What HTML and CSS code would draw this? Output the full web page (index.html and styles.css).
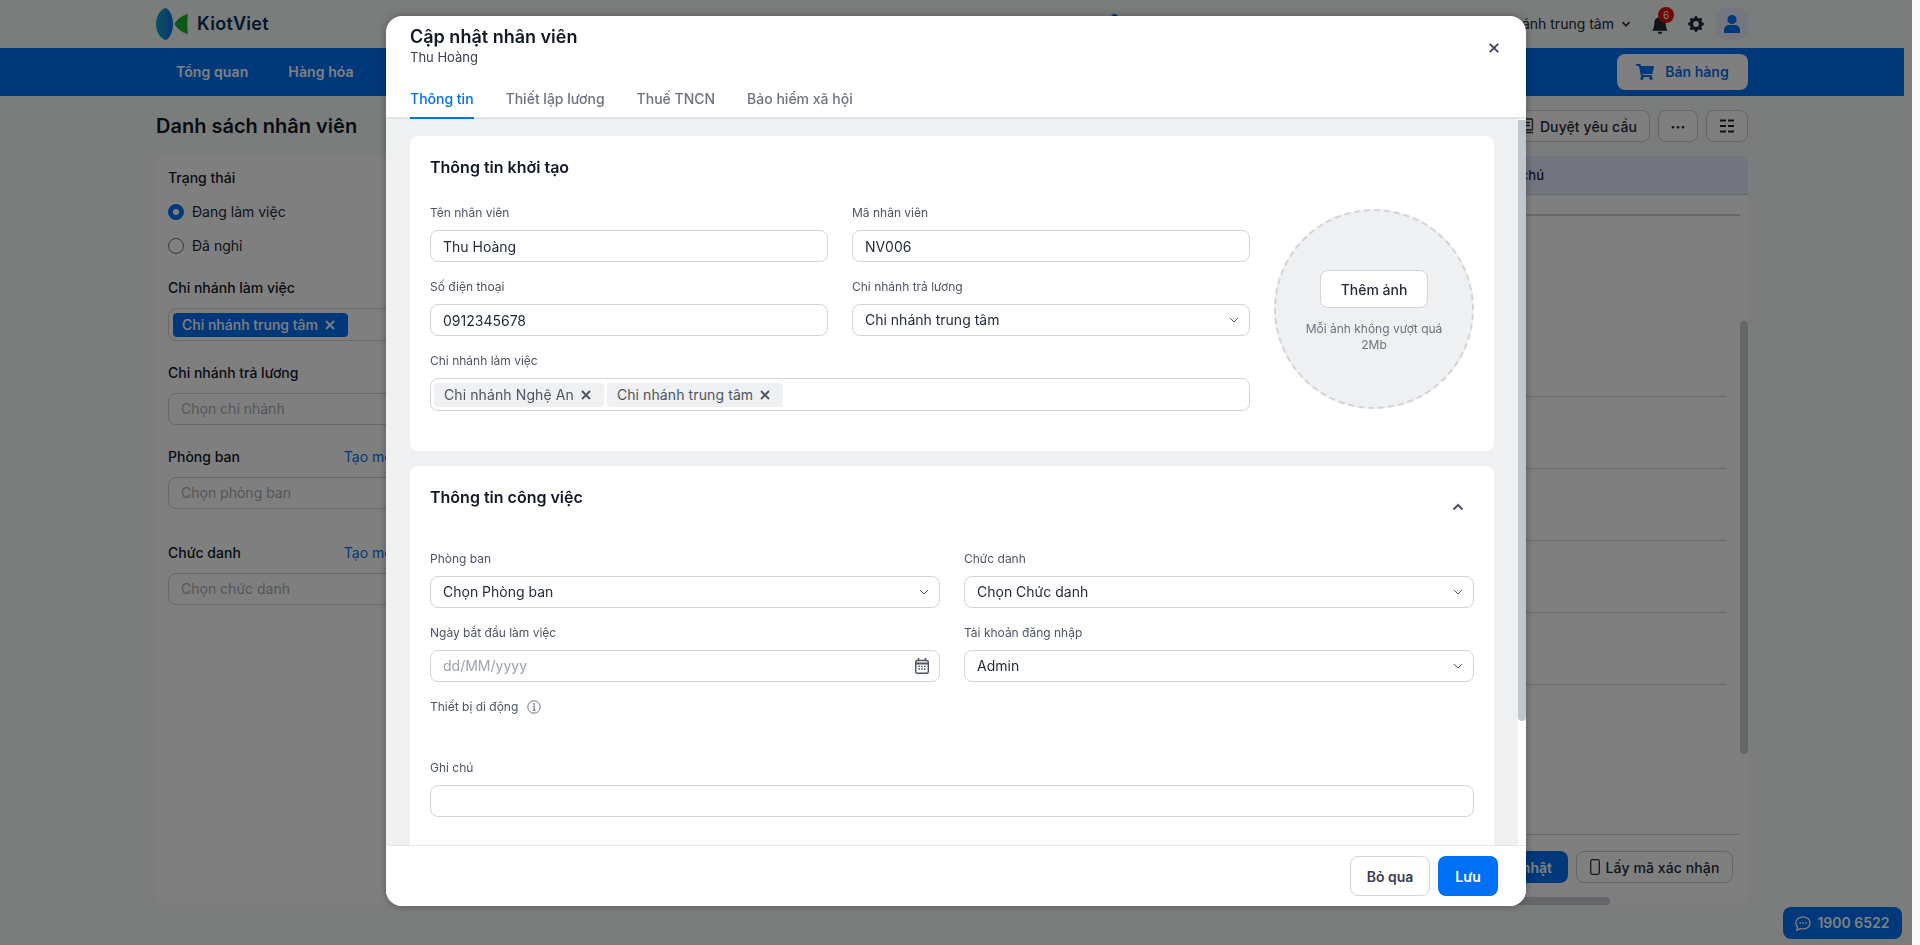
FILE: index.html
```html
<!DOCTYPE html>
<html lang="vi">
<head>
    <meta charset="UTF-8">
    <meta name="viewport" content="width=device-width, initial-scale=1.0">
    <title>Cập nhật nhân viên</title>
    <link rel="stylesheet" href="styles.css">
</head>
<body>
    <div class="app">
        <div class="topbar">
            <div class="logo">
                <svg width="32" height="32" viewBox="0 0 32 32">
                    <defs>
                        <linearGradient id="lens" x1="0" y1="0" x2="1" y2="0">
                            <stop offset="0" stop-color="#1aa3c4"/>
                            <stop offset="1" stop-color="#0a6fe0"/>
                        </linearGradient>
                    </defs>
                    <path d="M9 0C3 3 0 9 0 16s3 13 9 16c4 0 8-8 8-16S13 0 9 0z" fill="url(#lens)"/>
                    <path d="M32 6c-5 1-11 5-13.500 10C21 21 27 25 32 26c-1-7-1-13 0-20z" fill="#1fb02f"/>
                </svg>
                <span>KiotViet</span>
            </div>
            <span class="top-dot"></span>
            <div class="top-right">
                <span class="branch">Chi nhánh trung tâm</span>
                <svg class="branch-arrow" width="10" height="10" viewBox="0 0 10 10"><path d="M1.500 3.200 5 6.800l3.500-3.600" fill="none" stroke="#333" stroke-width="1.800"/></svg>
                <div class="bell">
                    <svg width="18" height="18" viewBox="0 0 16 16"><path fill="#1f2937" d="M8 16a2 2 0 0 0 2-2H6a2 2 0 0 0 2 2zm.995-14.901a1 1 0 1 0-1.990 0A5.002 5.002 0 0 0 3 6c0 1.098-.5 6-2 7h14c-1.500-1-2-5.902-2-7 0-2.420-1.720-4.440-4.005-4.901z"/></svg>
                    <span class="badge">6</span>
                </div>
                <svg class="gear" width="16" height="16" viewBox="0 0 16 16"><path fill="#1f2937" d="M9.405 1.050c-.413-1.400-2.397-1.400-2.810 0l-.1.340a1.464 1.464 0 0 1-2.105.872l-.31-.17c-1.283-.698-2.686.705-1.987 1.987l.169.311c.446.820.023 1.841-.872 2.105l-.34.1c-1.400.413-1.400 2.397 0 2.810l.34.1a1.464 1.464 0 0 1 .872 2.105l-.17.31c-.698 1.283.705 2.686 1.987 1.987l.311-.169a1.464 1.464 0 0 1 2.105.872l.1.340c.413 1.400 2.397 1.400 2.810 0l.1-.34a1.464 1.464 0 0 1 2.105-.872l.31.17c1.283.698 2.686-.705 1.987-1.987l-.169-.311a1.464 1.464 0 0 1 .872-2.105l.34-.1c1.400-.413 1.400-2.397 0-2.810l-.34-.1a1.464 1.464 0 0 1-.872-2.105l.17-.31c.698-1.283-.705-2.686-1.987-1.987l-.311.169a1.464 1.464 0 0 1-2.105-.872l-.1-.34zM8 10.930a2.929 2.929 0 1 1 0-5.860 2.929 2.929 0 0 1 0 5.858z"/></svg>
                <div class="avatar">
                    <svg width="16" height="18" viewBox="0 0 16 18"><circle cx="8" cy="4.500" r="4.500" fill="#0070f4"/><path d="M0 18v-2.500C0 12 2.500 10 5 10h6c2.500 0 5 2 5 5.500V18z" fill="#0070f4"/></svg>
                </div>
            </div>
        </div>

        <div class="nav">
            <a class="nav-item">Tổng quan</a>
            <a class="nav-item">Hàng hóa</a>
            <a class="sell-btn">
                <svg width="18" height="16" viewBox="0 0 576 512"><path fill="#0070f4" d="M528.120 301.319l47.273-208C578.806 78.301 567.391 64 551.990 64H159.208l-9.166-44.810C147.758 8.021 137.930 0 126.529 0H24C10.745 0 0 10.745 0 24v16c0 13.255 10.745 24 24 24h69.883l70.248 343.435C147.325 417.100 136 435.222 136 456c0 30.928 25.072 56 56 56s56-25.072 56-56c0-15.674-6.447-29.835-16.824-40h209.647C430.447 426.165 424 440.326 424 456c0 30.928 25.072 56 56 56s56-25.072 56-56c0-22.172-12.888-41.332-31.579-50.405l5.517-24.276c3.413-15.018-8.002-29.319-23.403-29.319H218.117l-6.545-32h293.145c11.206 0 20.920-7.754 23.403-18.681z"/></svg>
                Bán hàng
            </a>
        </div>

        <div class="titlebar">
            <h1>Danh sách nhân viên</h1>
            <div class="title-actions">
                <button class="tool-btn">
                    <svg width="14" height="16" viewBox="0 0 14 16"><rect x="1.500" y="1" width="11" height="11" rx="1" fill="none" stroke="#333" stroke-width="1.300"/><path d="M4 4.500h6M4 7.500h6M1 14.500h12" stroke="#333" stroke-width="1.300"/></svg>
                    Duyệt yêu cầu
                </button>
                <button class="tool-btn tool-more">···</button>
                <button class="tool-btn tool-grid">
                    <svg width="16" height="14" viewBox="0 0 16 14"><path d="M1 1.500h6M9 1.500h6M1 7h6M9 7h6M1 12.500h6M9 12.500h6" stroke="#222" stroke-width="2"/></svg>
                </button>
            </div>
        </div>

        <div class="content">
            <div class="filter">
                <div class="filter-label filter-first">Trạng thái</div>
                <div class="radio-row"><span class="radio radio-on"></span>Đang làm việc</div>
                <div class="radio-row"><span class="radio"></span>Đã nghỉ</div>

                <div class="filter-label filter-gap">Chi nhánh làm việc</div>
                <div class="filter-box filter-tags">
                    <span class="tag branch-tag">Chi nhánh trung tâm
                        <svg width="12" height="12" viewBox="0 0 12 12"><path d="M2 2l8 8M10 2l-8 8" stroke="#fff" stroke-width="1.800"/></svg>
                    </span>
                </div>

                <div class="filter-label filter-next">Chi nhánh trả lương</div>
                <div class="filter-box">Chọn chi nhánh</div>

                <div class="filter-label filter-next filter-split">Phòng ban <a>Tạo mới</a></div>
                <div class="filter-box">Chọn phòng ban</div>

                <div class="filter-label filter-far filter-split">Chức danh <a>Tạo mới</a></div>
                <div class="filter-box">Chọn chức danh</div>
            </div>

            <div class="table">
                <div class="table-head">Ghi chú</div>
                <div class="table-rows">
                    <div class="row row-first"></div>
                    <div class="row row-tall"></div>
                    <div class="row"></div>
                    <div class="row"></div>
                    <div class="row"></div>
                    <div class="row"></div>
                    <div class="row row-last"></div>
                </div>
                <div class="table-actions">
                    <button class="primary-btn">Cập nhật</button>
                    <button class="tool-btn tool-code">
                        <svg width="10" height="16" viewBox="0 0 10 16"><rect x=".7" y=".7" width="8.600" height="14.600" rx="1.500" fill="none" stroke="#333" stroke-width="1.300"/></svg>
                        Lấy mã xác nhận
                    </button>
                </div>
                <div class="table-scroll-y"></div>
                <div class="table-scroll-x"></div>
            </div>
        </div>

        <div class="chat-btn">
            <svg width="16" height="15" viewBox="0 0 18 17"><path d="M9 1c4.400 0 8 2.900 8 6.800s-3.600 6.800-8 6.800c-.9 0-1.800-.1-2.600-.4L2 16l.8-3.500C1.600 11.300 1 9.600 1 7.800 1 3.900 4.600 1 9 1z" fill="none" stroke="#fff" stroke-width="1.500"/><circle cx="5.800" cy="7.800" r="1" fill="#fff"/><circle cx="9" cy="7.800" r="1" fill="#fff"/><circle cx="12.200" cy="7.800" r="1" fill="#fff"/></svg>
            1900 6522
        </div>
    </div>

    <div class="overlay">
        <div class="modal">
            <div class="modal-header">
                <div class="modal-title">
                    <h2>Cập nhật nhân viên</h2>
                    <svg class="modal-close" width="10" height="10" viewBox="0 0 10 10"><path d="M.8.8l8.400 8.400M9.200.8.8 9.200" stroke="#374151" stroke-width="1.800"/></svg>
                </div>
                <div class="modal-sub">Thu Hoàng</div>
                <div class="tabs">
                    <a class="tab tab-active">Thông tin</a>
                    <a class="tab">Thiết lập lương</a>
                    <a class="tab">Thuế TNCN</a>
                    <a class="tab">Bảo hiểm xã hội</a>
                </div>
            </div>

            <div class="modal-main">
                <div class="modal-body">
                    <div class="card">
                        <h3>Thông tin khởi tạo</h3>
                        <div class="init-layout">
                            <div class="form-grid">
                                <div class="field">
                                    <label>Tên nhân viên</label>
                                    <input class="box" type="text" value="Thu Hoàng">
                                </div>
                                <div class="field">
                                    <label>Mã nhân viên</label>
                                    <input class="box" type="text" value="NV006">
                                </div>
                                <div class="field">
                                    <label>Số điện thoại</label>
                                    <input class="box" type="text" value="0912345678">
                                </div>
                                <div class="field">
                                    <label>Chi nhánh trả lương</label>
                                    <div class="box select">Chi nhánh trung tâm
                                        <svg width="10" height="10" viewBox="0 0 10 10"><path d="M1 3l4 4 4-4" fill="none" stroke="#4b5563" stroke-width="1"/></svg>
                                    </div>
                                </div>
                                <div class="field field-wide">
                                    <label>Chi nhánh làm việc</label>
                                    <div class="box tag-box">
                                        <span class="tag">Chi nhánh Nghệ An
                                            <svg width="12" height="12" viewBox="0 0 12 12"><path d="M2 2l8 8M10 2l-8 8" stroke="#4b5563" stroke-width="1.800"/></svg>
                                        </span>
                                        <span class="tag">Chi nhánh trung tâm
                                            <svg width="12" height="12" viewBox="0 0 12 12"><path d="M2 2l8 8M10 2l-8 8" stroke="#4b5563" stroke-width="1.800"/></svg>
                                        </span>
                                    </div>
                                </div>
                            </div>
                            <div class="photo">
                                <button class="photo-btn">Thêm ảnh</button>
                                <p>Mỗi ảnh không vượt quá 2Mb</p>
                            </div>
                        </div>
                    </div>

                    <div class="card card-job">
                        <div class="card-head">
                            <h3>Thông tin công việc</h3>
                            <svg width="12" height="8" viewBox="0 0 12 8"><path d="M1.500 6.500 6 2l4.500 4.500" fill="none" stroke="#4b5563" stroke-width="2"/></svg>
                        </div>
                        <div class="form-grid job-grid">
                            <div class="field">
                                <label>Phòng ban</label>
                                <div class="box select">Chọn Phòng ban
                                    <svg width="10" height="10" viewBox="0 0 10 10"><path d="M1 3l4 4 4-4" fill="none" stroke="#4b5563" stroke-width="1"/></svg>
                                </div>
                            </div>
                            <div class="field">
                                <label>Chức danh</label>
                                <div class="box select">Chọn Chức danh
                                    <svg width="10" height="10" viewBox="0 0 10 10"><path d="M1 3l4 4 4-4" fill="none" stroke="#4b5563" stroke-width="1"/></svg>
                                </div>
                            </div>
                            <div class="field">
                                <label>Ngày bắt đầu làm việc</label>
                                <div class="box select placeholder">dd/MM/yyyy
                                    <svg width="14" height="16" viewBox="0 0 14 16"><rect x=".7" y="2.500" width="12.600" height="12.800" rx="1.500" fill="none" stroke="#4b5563" stroke-width="1.400"/><path d="M.7 5.500h12.600" stroke="#4b5563" stroke-width="2"/><path d="M3.500 0v3M10.500 0v3" stroke="#4b5563" stroke-width="1.500"/><path d="M3.500 8.300h1.500M6.300 8.300h1.500M9 8.300h1.500M3.500 11h1.500M6.300 11h1.500M9 11h1.500" stroke="#4b5563" stroke-width="1.300"/></svg>
                                </div>
                            </div>
                            <div class="field">
                                <label>Tài khoản đăng nhập</label>
                                <div class="box select">Admin
                                    <svg width="10" height="10" viewBox="0 0 10 10"><path d="M1 3l4 4 4-4" fill="none" stroke="#4b5563" stroke-width="1"/></svg>
                                </div>
                            </div>
                        </div>
                        <div class="device-label">
                            Thiết bị di động
                            <svg width="14" height="14" viewBox="0 0 14 14"><circle cx="7" cy="7" r="6.200" fill="none" stroke="#6b7280" stroke-width="1"/><path d="M5.800 6.200H7.200V10M5.600 10.200h3.200" fill="none" stroke="#6b7280" stroke-width="1.100"/><circle cx="7" cy="4" r=".9" fill="#6b7280"/></svg>
                        </div>
                        <div class="field">
                            <label>Ghi chú</label>
                            <input class="box" type="text">
                        </div>
                    </div>
                </div>
                <div class="modal-scroll"><span></span></div>
            </div>

            <div class="modal-footer">
                <button class="btn btn-ghost">Bỏ qua</button>
                <button class="btn btn-save">Lưu</button>
            </div>
        </div>
    </div>
</body>
</html>
```

FILE: styles.css
```css
* {
    margin: 0;
    padding: 0;
    box-sizing: border-box;
}

html, body {
    height: 945px;
    overflow: hidden;
}

body {
    font-family: Inter, "Noto Sans", sans-serif;
    font-size: 14px;
    line-height: 20px;
    color: #1f2937;
    background: #fafafa;
}

button {
    font-family: inherit;
    cursor: pointer;
}

/* page behind the dialog */
.app {
    width: 1912px;
    height: 945px;
    background: #f7faf9;
}

.topbar {
    width: 1904px;
    height: 48px;
    padding: 0 156px;
    display: flex;
    align-items: center;
}

.logo {
    display: flex;
    align-items: center;
    gap: 9px;
    font-size: 18px;
    font-weight: 600;
    letter-spacing: 0.3px;
    color: #0b2f57;
}

.top-dot {
    width: 7px;
    height: 7px;
    margin: 14px 0 0 842px;
    border-radius: 50%;
    background: #0070f4;
    align-self: flex-start;
}

.top-right {
    margin-left: auto;
    display: flex;
    align-items: center;
}

.branch {
    font-size: 14px;
}

.branch-arrow {
    margin: 0 20px 0 7px;
}

.bell {
    position: relative;
    height: 18px;
    margin-top: 2px;
}

.badge {
    position: absolute;
    left: 7px;
    top: -9px;
    width: 16px;
    height: 16px;
    border-radius: 50%;
    background: #e00d0d;
    color: #fff;
    font-size: 10px;
    line-height: 16px;
    text-align: center;
}

.gear {
    margin: 0 12px 0 19px;
}

.avatar {
    width: 32px;
    height: 32px;
    border-radius: 10px;
    background: #e9eefa;
    display: flex;
    align-items: center;
    justify-content: center;
}

.nav {
    width: 1904px;
    height: 48px;
    padding: 0 156px 0 176px;
    background: #0070f4;
    display: flex;
    align-items: center;
    gap: 40px;
}

.nav-item {
    color: #fff;
    font-weight: 600;
    letter-spacing: 0.1px;
}

.sell-btn {
    margin-left: auto;
    width: 131px;
    height: 36px;
    border-radius: 8px;
    background: #fff;
    color: #0070f4;
    font-weight: 600;
    display: flex;
    align-items: center;
    justify-content: center;
    gap: 11px;
}

.titlebar {
    width: 1904px;
    height: 60px;
    padding: 0 156px;
    display: flex;
    align-items: center;
    justify-content: space-between;
}

.titlebar h1 {
    font-size: 20px;
    font-weight: 600;
    color: #111827;
}

.title-actions {
    display: flex;
    gap: 8px;
}

.tool-btn {
    height: 32px;
    padding: 0 12px;
    border: 1px solid #c9ccd2;
    border-radius: 8px;
    background: #fff;
    color: #1f2937;
    font-size: 14px;
    font-weight: 500;
    letter-spacing: 0.1px;
    display: flex;
    align-items: center;
    gap: 6px;
}

.tool-more {
    width: 40px;
    justify-content: center;
    font-weight: 800;
}

.tool-grid {
    width: 42px;
    justify-content: center;
}

.tool-code {
    width: 157px;
    padding: 0;
    justify-content: center;
}

.content {
    width: 1592px;
    height: 749px;
    margin-left: 156px;
    background: #fff;
    border-radius: 8px;
    display: flex;
}

.filter {
    width: 300px;
    padding: 12px;
}

.filter-label {
    font-weight: 500;
    color: #111827;
    margin-bottom: 10px;
}

.filter-first {
    margin-bottom: 12px;
}

.filter-split {
    width: 228px;
    display: flex;
    justify-content: space-between;
}

.filter-split a {
    color: #0070f4;
    font-weight: 400;
}

.radio-row {
    height: 24px;
    margin-top: 10px;
    display: flex;
    align-items: center;
    gap: 8px;
}

.radio {
    width: 16px;
    height: 16px;
    border: 1px solid #6b7280;
    border-radius: 50%;
    background: #fff;
}

.radio-on {
    border: 5px solid #0070f4;
}

.filter-gap {
    margin-top: 20px;
}

.filter-next {
    margin-top: 22px;
}

.filter-far {
    margin-top: 34px;
}

.filter-box {
    height: 32px;
    padding: 0 12px;
    border: 1px solid #cfd3d9;
    border-radius: 8px;
    color: #a6acb6;
    display: flex;
    align-items: center;
}

.filter-tags {
    height: 33px;
    padding: 0 4px;
}

.table {
    flex: 1;
    position: relative;
}

.table-head {
    height: 39px;
    border-bottom: 1px solid #bcd4f2;
    border-radius: 0 8px 0 0;
    background: #e4eafa;
    padding-right: 204px;
    font-weight: 500;
    font-size: 13px;
    line-height: 38px;
    text-align: right;
}

.table-rows {
    padding-right: 22px;
}

.row {
    height: 72px;
    border-bottom: 1px solid #cfd1d4;
}

.row-first {
    height: 21px;
    margin-right: -14px;
    border-bottom-width: 2px;
}

.row-tall {
    height: 181px;
}

.row-last {
    height: 150px;
    margin-right: -14px;
}

.table-actions {
    margin-top: 16px;
    padding-right: 15px;
    display: flex;
    justify-content: flex-end;
    gap: 8px;
}

.primary-btn {
    height: 32px;
    padding: 0 16px;
    border: none;
    border-radius: 8px;
    background: #0070f4;
    color: #fff;
    font-size: 14px;
    font-weight: 600;
}

.table-scroll-y {
    position: absolute;
    right: 0;
    top: 165px;
    width: 8px;
    height: 433px;
    border-radius: 4px;
    background: #c8ccd3;
}

.table-scroll-x {
    position: absolute;
    right: 138px;
    bottom: 0;
    width: 500px;
    height: 8px;
    border-radius: 4px;
    background: #c8ccd3;
}

.chat-btn {
    position: fixed;
    left: 1783px;
    top: 907px;
    width: 119px;
    height: 32px;
    border-radius: 8px;
    background: #0070f4;
    color: #fff;
    font-size: 14px;
    font-weight: 600;
    display: flex;
    align-items: center;
    justify-content: center;
    gap: 6px;
}

/* dialog */
.overlay {
    position: fixed;
    left: 0;
    top: 0;
    right: 8px;
    bottom: 0;
    background: rgba(0,0,0,0.5);
}

.modal {
    position: absolute;
    left: 386px;
    top: 16px;
    width: 1140px;
    height: 890px;
    border-radius: 16px;
    background: #fff;
    box-shadow: 0 0 8px rgba(0,0,0,0.3);
    overflow: hidden;
    display: flex;
    flex-direction: column;
}

.modal-header {
    height: 103px;
    padding: 9px 24px 0;
    border-bottom: 2px solid #e2e4e8;
    flex-shrink: 0;
}

.modal-title {
    height: 24px;
    display: flex;
    justify-content: space-between;
    align-items: flex-start;
}

.modal-title h2 {
    font-size: 18px;
    line-height: 24px;
    font-weight: 600;
    color: #111827;
}

.modal-close {
    margin: 18px 3px 0 0;
}

.modal-sub {
    font-size: 13px;
    line-height: 16px;
    color: #374151;
}

.tabs {
    display: flex;
    gap: 32px;
    margin-top: 24px;
}

.tab {
    height: 30px;
    font-weight: 500;
    line-height: 20px;
    color: #6b7280;
}

.tab-active {
    color: #0070f4;
    border-bottom: 2px solid #0070f4;
}

.modal-main {
    flex: 1;
    min-height: 0;
    display: flex;
}

.modal-body {
    flex: 1;
    padding: 17px 24px;
    background: #eff0f2;
    overflow: hidden;
}

.modal-scroll {
    width: 8px;
}

.modal-scroll span {
    display: block;
    height: 601px;
    margin-top: 1px;
    border-radius: 0 0 4px 4px;
    background: #c0c6ce;
}

.card {
    padding: 20px 20px 40px;
    border-radius: 8px;
    background: #fff;
}

.card h3 {
    font-size: 16px;
    line-height: 22px;
    font-weight: 600;
    color: #111827;
    margin-bottom: 26px;
}

.card-job {
    margin-top: 15px;
}

.card-head {
    height: 22px;
    display: flex;
    justify-content: space-between;
    align-items: flex-start;
    margin-bottom: 42px;
}

.card-head svg {
    margin: 17px 10px 0 0;
}

.init-layout {
    display: flex;
    gap: 24px;
    align-items: flex-start;
}

.form-grid {
    flex: 1;
    display: grid;
    grid-template-columns: 1fr 1fr;
    gap: 16px 24px;
}

.field-wide {
    grid-column: 1 / 3;
}

.field label {
    display: block;
    font-size: 12px;
    line-height: 18px;
    color: #4b5563;
    margin-bottom: 8px;
}

.box {
    width: 100%;
    height: 32px;
    padding: 0 12px;
    border: 1px solid #d1d4da;
    border-radius: 8px;
    background: #fff;
    color: #1f2937;
    font-family: inherit;
    font-size: 14px;
    display: block;
}

.select {
    padding-right: 10px;
    display: flex;
    align-items: center;
    justify-content: space-between;
}

.placeholder {
    color: #9ca3af;
}

.tag-box {
    height: 33px;
    padding: 0 3px;
    display: flex;
    align-items: center;
    gap: 3px;
}

.tag {
    height: 24px;
    padding: 0 12px 0 10px;
    border-radius: 4px;
    background: #eff0f2;
    color: #4b5563;
    letter-spacing: 0.1px;
    display: flex;
    align-items: center;
    gap: 6px;
}

.branch-tag {
    padding-left: 9px;
    background: #0070f4;
    color: #fff;
    font-weight: 500;
    letter-spacing: 0;
}

.photo {
    width: 200px;
    height: 200px;
    margin-top: 5px;
    padding: 59px 20px 0;
    border: 2px dashed #d0d3d8;
    border-radius: 50%;
    background: #eff0f2;
    display: flex;
    flex-direction: column;
    align-items: center;
    flex-shrink: 0;
}

.photo-btn {
    width: 108px;
    height: 38px;
    border: 1px solid #d1d4da;
    border-radius: 8px;
    background: #fff;
    color: #1f2937;
    font-size: 14px;
    font-weight: 500;
    flex-shrink: 0;
}

.photo p {
    margin-top: 13px;
    font-size: 12px;
    line-height: 16px;
    color: #6b7280;
    text-align: center;
}

.job-grid {
    margin-bottom: 16px;
}

.device-label {
    height: 18px;
    margin-bottom: 43px;
    font-size: 12px;
    line-height: 18px;
    color: #4b5563;
    display: flex;
    align-items: center;
    gap: 9px;
}

.modal-footer {
    height: 61px;
    padding: 10px 28px 0;
    border-top: 1px solid #e5e7eb;
    background: #fff;
    display: flex;
    justify-content: flex-end;
    gap: 8px;
    flex-shrink: 0;
}

.btn {
    height: 40px;
    border-radius: 8px;
    font-size: 14px;
    font-weight: 600;
}

.btn-ghost {
    width: 80px;
    border: 1px solid #d1d4da;
    background: #fff;
    color: #374151;
}

.btn-save {
    width: 60px;
    border: none;
    background: #0070f4;
    color: #fff;
}
```
